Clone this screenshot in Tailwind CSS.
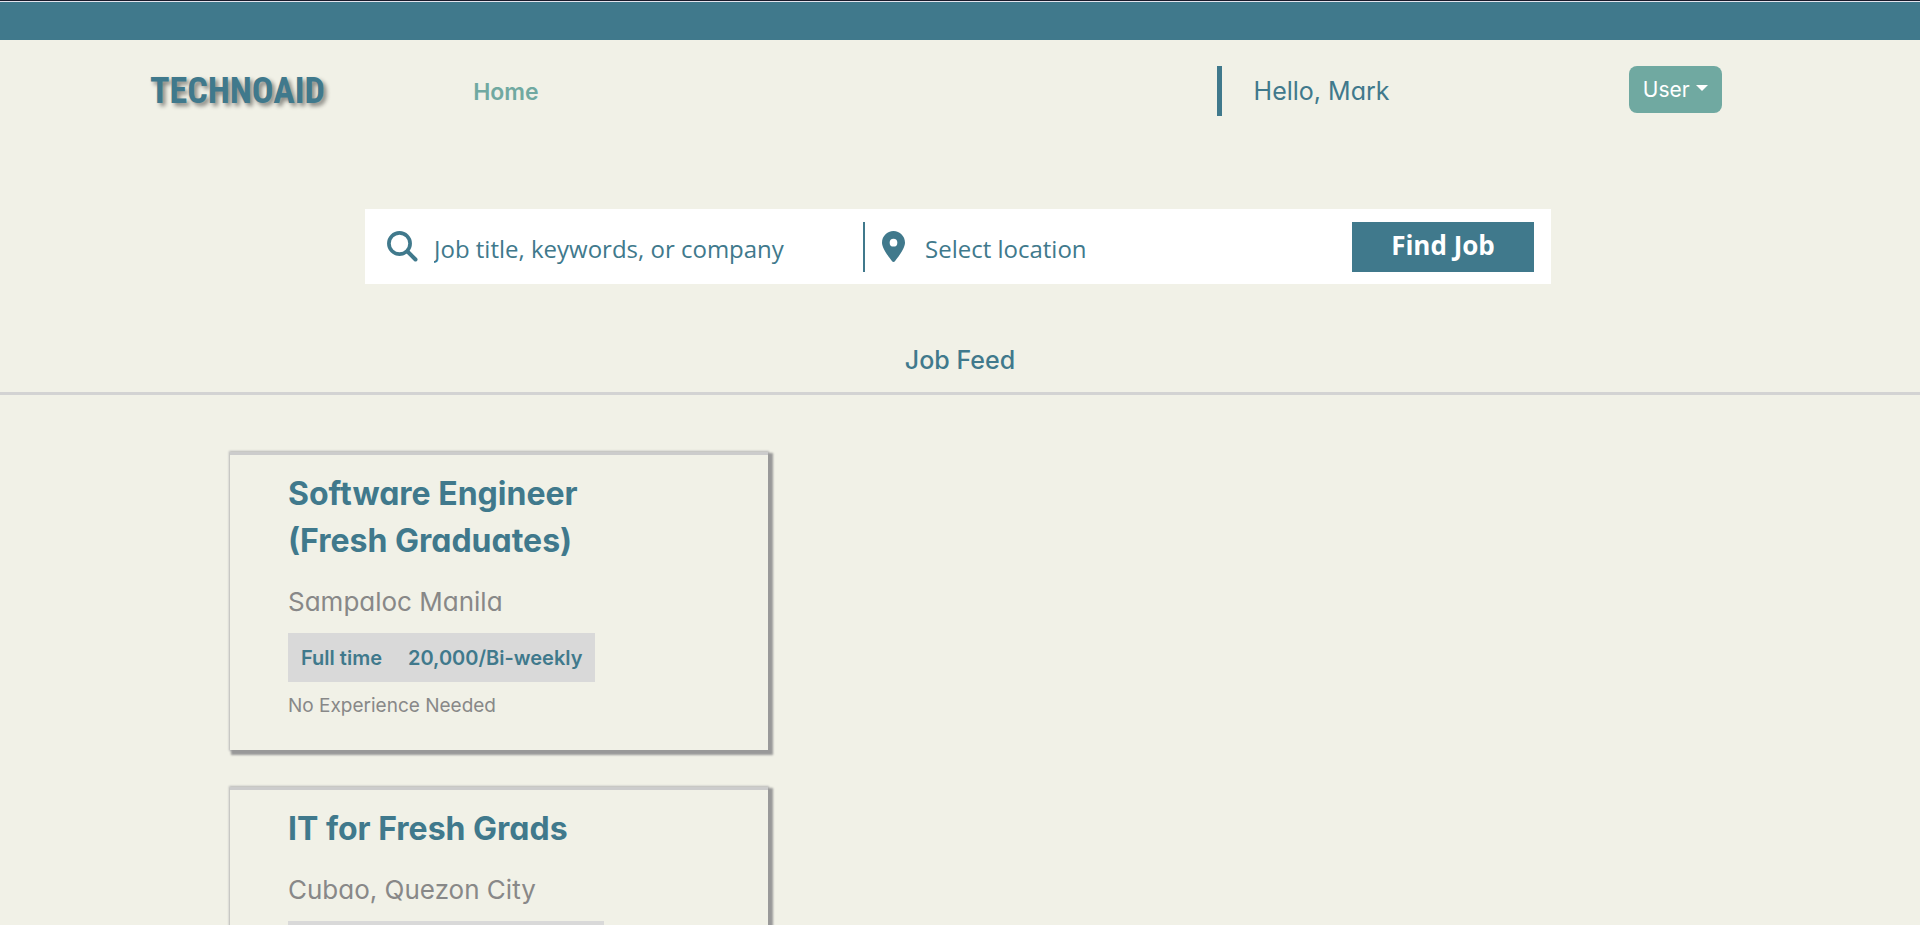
<!DOCTYPE html>
<html lang="en">
<head>
<meta charset="utf-8">
<meta name="viewport" content="width=device-width, initial-scale=1">
<title>TechnoAid - Job Feed</title>
<script src="https://cdn.jsdelivr.net/npm/@tailwindcss/browser@4"></script>
</head>
<body class="h-screen overflow-hidden bg-[#f1f1e7] font-['Inter',sans-serif] text-[#40798c] [font-feature-settings:'cv11']">
  <div class="h-10 border-t border-[#1b1b2b] bg-[#40798c]"><div class="h-px bg-[#e4e4ee]"></div></div>

  <header class="grid h-[100px] grid-cols-[323fr_743fr_412fr_291fr] items-start pl-[150px] pt-[26px]">
    <a href="#" class="font-['Roboto_Condensed','Liberation_Sans_Narrow',sans-serif] text-4xl leading-[50px] font-bold [text-shadow:3px_3px_4px_rgba(0,0,0,0.45)]">TECHNOAID</a>
    <nav class="leading-[52px]"><a href="#" class="text-[23px] font-semibold text-[#70a9a1]">Home</a></nav>
    <p class="h-[50px] border-l-[5px] border-[#40798c] pl-8 text-[25px] leading-[50px]">Hello, Mark</p>
    <div>
      <button type="button" class="flex h-[47px] items-center gap-[6px] rounded-lg bg-[#70a9a1] px-[14px] text-[21px] text-white">User
        <svg class="-mt-1 h-[6px] w-3" viewBox="0 0 12 6" fill="currentColor" aria-hidden="true"><path d="M0 0h12L6 6z"/></svg>
      </button>
    </div>
  </header>

  <form class="mt-[69px] mr-[369px] ml-[365px] flex h-[75px] items-center bg-white pr-[17px] pl-[22px] font-['Open_Sans',sans-serif]">
    <label for="job" class="mr-4 shrink-0" aria-label="Job title, keywords, or company">
      <svg class="size-[31px]" viewBox="0 0 31 31" fill="none" stroke="currentColor" aria-hidden="true"><circle cx="12.500" cy="12.500" r="10.600" stroke-width="3.700"/><path d="M20.500 20.500l8 8" stroke-width="4" stroke-linecap="round"/></svg>
    </label>
    <input id="job" type="text" placeholder="Job title, keywords, or company" class="min-w-0 flex-[430] pt-1 text-2xl outline-none placeholder:text-[#40798c] placeholder:opacity-100">
    <div class="mr-[17px] h-[50px] w-0.5 shrink-0 bg-[#40798c]"></div>
    <label for="location" class="mr-5 shrink-0" aria-label="Location">
      <svg class="h-[31px] w-[23px]" viewBox="0 0 384 512" preserveAspectRatio="none" fill="currentColor" aria-hidden="true"><path d="M215.700 499.200C267 435 384 279.400 384 192C384 86 298 0 192 0S0 86 0 192c0 87.400 117 243 168.300 307.200c12.300 15.300 35.100 15.300 47.400 0zM192 128a64 64 0 1 1 0 128a64 64 0 1 1 0-128z"/></svg>
    </label>
    <input id="location" type="text" placeholder="Select location" class="min-w-0 flex-[428] pt-1 text-2xl outline-none placeholder:text-[#40798c] placeholder:opacity-100">
    <button type="submit" class="h-[50px] w-[182px] shrink-0 bg-[#40798c] pb-1 text-[26px] leading-[44px] font-bold text-white">Find Job</button>
  </form>

  <main>
    <h1 class="mt-[54px] border-b-[3px] border-[#d3d3d3] pb-[10px] text-center text-[25px] leading-[44px] font-medium">Job Feed</h1>
    <section class="mt-[57px] ml-[230px] flex w-[538px] flex-col gap-[37px]">
      <article class="border-t-[3px] border-[#cccccc] bg-[#f1f1e7] pt-[15px] pr-[110px] pb-[29px] pl-[58px] shadow-[3px_3px_2px_2px_#999,0_0_2px_1px_#bbb]">
        <h2 class="text-[32px] leading-[47px] font-bold">Software Engineer (Fresh Graduates)</h2>
        <p class="mt-[18px] text-[26px] leading-[40px] text-[#888888]">Sampaloc Manila</p>
        <div class="mt-[11px] flex h-[49px] w-fit items-center gap-[26px] bg-[#d9d9d9] px-[13px] text-xl font-semibold"><span>Full time</span><span>20,000/Bi-weekly</span></div>
        <p class="mt-[9px] text-[19px] leading-[30px] text-[#888888]">No Experience Needed</p>
      </article>
      <article class="border-t-[3px] border-[#cccccc] bg-[#f1f1e7] pt-[15px] pr-[110px] pb-[29px] pl-[58px] shadow-[3px_3px_2px_2px_#999,0_0_2px_1px_#bbb]">
        <h2 class="text-[32px] leading-[47px] font-bold">IT for Fresh Grads</h2>
        <p class="mt-[18px] text-[26px] leading-[40px] text-[#888888]">Cubao, Quezon City</p>
        <div class="mt-[11px] h-[49px] w-[316px] bg-[#d9d9d9]"></div>
      </article>
    </section>
  </main>
</body>
</html>
